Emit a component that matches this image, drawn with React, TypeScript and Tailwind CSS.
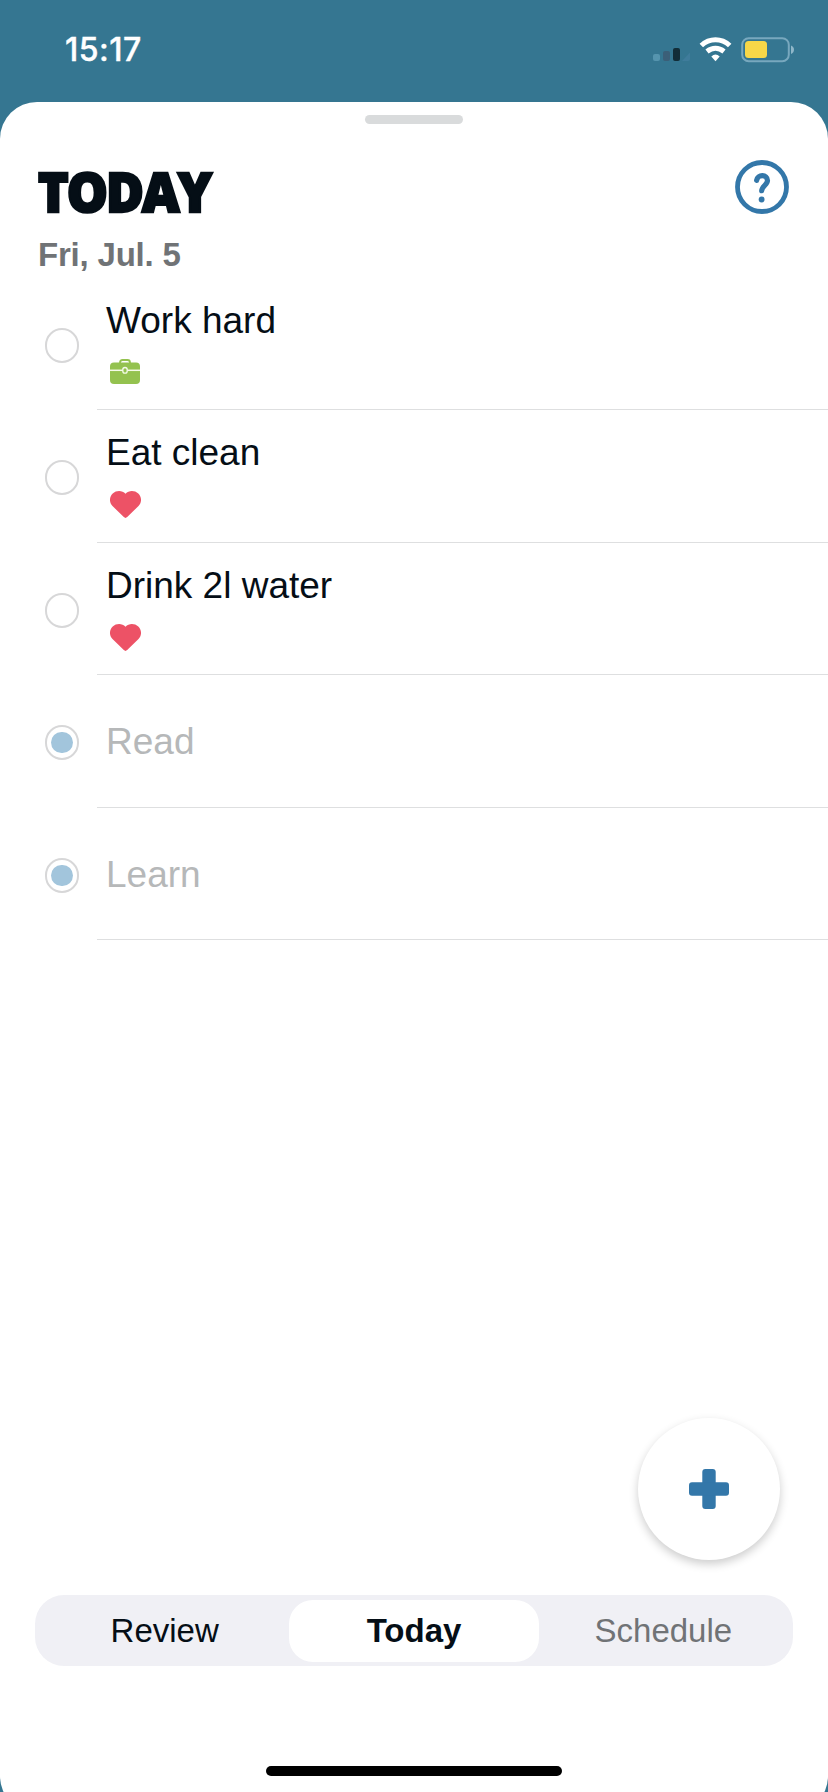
import clsx from "clsx";

const habits = [
  { title: "Work hard", category: "work", done: false },
  { title: "Eat clean", category: "health", done: false },
  { title: "Drink 2l water", category: "health", done: false },
  { title: "Read", done: true },
  { title: "Learn", done: true },
];

const tabs = ["Review", "Today", "Schedule"];

function StatusBar() {
  return (
    <header className="flex h-[102px] shrink-0 items-start justify-between pl-[65px] pr-[34px] pt-[29px] text-white">
      <span className="font-['Inter'] text-[32px] font-medium leading-[42px] tracking-[0.5px] [-webkit-text-stroke:0.4px_#fff]">15:17</span>
      <div className="flex pt-[8px]">
        <svg width="174" height="26" viewBox="0 0 174 26" fill="none">
          <rect x="33" y="17" width="7" height="7" rx="2" fill="#5594ae" />
          <rect x="43" y="14" width="7" height="10" rx="2" fill="#3b5f78" />
          <rect x="53" y="11" width="7" height="13" rx="2" fill="#122d38" />
          <path d="M62 24 70 15.500V22q0 2-2 2z" fill="#3f7c9b" />
          <g stroke="#fff" strokeWidth="5">
            <path d="M81.300 8.500C89.500.800 101.500.800 109.700 8.500" />
            <path d="M87 14.500C92.200 10.300 98.800 10.300 104 14.500" />
          </g>
          <path d="M91.300 19.500q4.200-3.800 8.400 0L95.500 24.300z" fill="#fff" />
          <rect x="122.200" y="1.200" width="46.600" height="23" rx="6.500" stroke="#78a8be" strokeWidth="2" />
          <rect x="125" y="4" width="22" height="17" rx="3.500" fill="#f7d748" />
          <path d="M171 8.500q3 1.300 3 4.200t-3 4.200z" fill="#8fb7c9" />
        </svg>
      </div>
    </header>
  );
}

function HelpIcon() {
  return (
    <svg width="54" height="54" viewBox="0 0 54 54" fill="none" stroke="#3377a9">
      <circle cx="27" cy="27" r="24.500" strokeWidth="4.800" />
      <path d="M21.600 20.300C22.400 14 32.600 14.300 32.500 20.500c0 4.200-5.800 5.800-5.800 10.200" strokeWidth="5.200" strokeLinecap="round" />
      <circle cx="26.600" cy="39.500" r="2.900" fill="#3377a9" stroke="none" />
    </svg>
  );
}

function BriefcaseIcon() {
  return (
    <svg width="30" height="25" viewBox="0 0 30 25" fill="none">
      <path d="M10 4V3.500Q10 1 12.500 1h5Q20 1 20 3.500V4" stroke="#94c24f" strokeWidth="1.800" />
      <rect y="3.500" width="30" height="21.500" rx="4" fill="#94c24f" />
      <path d="M0 11.300h30" stroke="#f5fbe9" strokeWidth="1.500" />
      <rect x="12.800" y="8.500" width="4.400" height="5.600" rx="2.200" fill="#94c24f" stroke="#f5fbe9" strokeWidth="1.300" />
    </svg>
  );
}

function HeartIcon() {
  return (
    <svg width="31" height="27" viewBox="0 0 31 27" fill="#ed5266">
      <path d="M15.500 2.800C12.200-.8 6.400-.8 2.700 2.500-.9 6-.9 11.400 2.500 15L13.800 26.100q1.700 1.600 3.400 0L28.500 15c3.400-3.600 3.400-9-.2-12.500C24.600-.8 18.800-.8 15.500 2.800z" />
    </svg>
  );
}

function HabitRow({ habit }: { habit: (typeof habits)[number] }) {
  return (
    <li className="flex h-[132.400px] pl-[45px]">
      <div className="mt-[50px] flex h-[35px] w-[34px] shrink-0 items-center justify-center rounded-full border-2 border-[#d7d7d8]">
        {habit.done && <span className="h-[21px] w-[22px] rounded-full bg-[#a2c5dc]" />}
      </div>
      <div
        className={clsx(
          "ml-[18px] flex flex-1 flex-col border-b border-[#dedfe0] pl-[9px] text-[37px] leading-[42px]",
          habit.done ? "justify-center pt-[3px] text-[#b6b8b9]" : "pt-[22px] text-[#050e16]"
        )}
      >
        {habit.title}
        {habit.category === "work" && (
          <div className="pl-[4px] pt-[17px]">
            <BriefcaseIcon />
          </div>
        )}
        {habit.category === "health" && (
          <div className="pl-[4px] pt-[17px]">
            <HeartIcon />
          </div>
        )}
      </div>
    </li>
  );
}

export default function App() {
  return (
    <div className="flex h-[1792px] w-[828px] flex-col overflow-hidden bg-[#357691] font-['Liberation_Sans',Arial,sans-serif]">
      <StatusBar />

      <main className="flex h-[1711px] shrink-0 flex-col rounded-[37px] bg-white">
        <div className="mx-auto mt-[13px] h-[9px] w-[98px] shrink-0 rounded-full bg-[#d9dbdc]" />

        <div className="flex h-[154px] shrink-0 items-start justify-between pl-[38px] pr-[39px] pt-[36px]">
          <div>
            <h1 className="mt-[3px] origin-left scale-x-[0.94] font-['Open_Sans'] text-[55px] font-extrabold leading-[56px] tracking-[-2px] text-[#050e16] [-webkit-text-stroke:2.5px_#050e16] [stroke-linejoin:round]">
              TODAY
            </h1>
            <p className="mt-[17px] text-[33px] font-bold leading-[38px] tracking-[-0.2px] text-[#707376]">Fri, Jul. 5</p>
          </div>
          <HelpIcon />
        </div>

        <ul className="shrink-0">
          {habits.map((habit) => (
            <HabitRow key={habit.title} habit={habit} />
          ))}
        </ul>

        <button className="ml-auto mr-[48px] mt-auto flex h-[142px] w-[142px] shrink-0 items-center justify-center rounded-full bg-white shadow-[0_4px_10px_rgba(0,0,0,0.2)]">
          <svg width="40" height="40" viewBox="0 0 40 40" fill="#3377a9">
            <rect x="13.300" width="13.400" height="40" rx="3" />
            <rect y="13.300" width="40" height="13.400" rx="3" />
          </svg>
        </button>

        <nav className="mx-[35px] mt-[35px] grid h-[71px] shrink-0 grid-cols-3 rounded-[29px] bg-[#f0f0f5] px-[5px] pb-[4px] pt-[5px] text-[33px]">
          {tabs.map((tab) => (
            <button
              key={tab}
              className={clsx(
                "rounded-[24px]",
                tab === "Today" && "bg-white font-bold text-[#050e16]",
                tab === "Review" && "text-[#050e16]",
                tab === "Schedule" && "text-[#707376]"
              )}
            >
              {tab}
            </button>
          ))}
        </nav>

        <div className="mx-auto mb-[37px] mt-[100px] h-[10px] w-[296px] shrink-0 rounded-full bg-black" />
      </main>
    </div>
  );
}
